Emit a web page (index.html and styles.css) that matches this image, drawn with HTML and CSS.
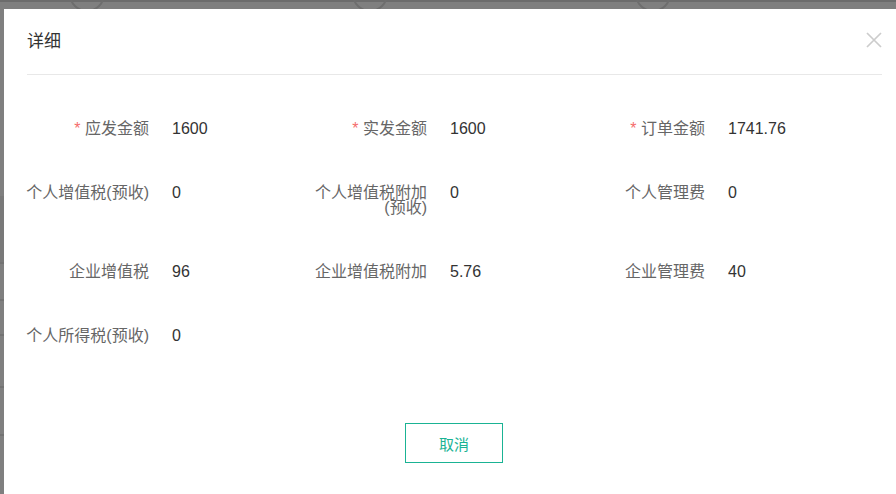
FILE: index.html
```html
<!DOCTYPE html>
<html lang="zh-CN">
<head>
    <meta charset="UTF-8">
    <meta name="viewport" content="width=device-width, initial-scale=1.0">
    <title>详细</title>
    <link rel="stylesheet" href="styles.css">
</head>
<body>
    <!-- страница под маской -->
    <div class="page">
        <div class="topbar"></div>
        <div class="tools">
            <span class="tool"></span>
            <span class="tool"></span>
            <span class="tool"></span>
        </div>
        <div class="list">
            <div class="list-row row-a"></div>
            <div class="list-row row-b"></div>
            <div class="list-row row-c"></div>
            <div class="list-row row-d"></div>
            <div class="list-row row-e"></div>
        </div>
    </div>

    <div class="mask"></div>

    <div class="dialog">
        <div class="dialog-header">
            <span class="dialog-title">详细</span>
            <span class="dialog-close">
                <svg width="16" height="16" viewBox="0 0 16 16">
                    <path d="M1 1 L15 15 M15 1 L1 15" stroke="#cccccc" stroke-width="1.7" fill="none"/>
                </svg>
            </span>
        </div>

        <div class="dialog-body">
            <div class="detail-grid">
                <div class="field">
                    <div class="field-label"><span class="req">*</span> 应发金额</div>
                    <div class="field-value">1600</div>
                </div>
                <div class="field">
                    <div class="field-label"><span class="req">*</span> 实发金额</div>
                    <div class="field-value">1600</div>
                </div>
                <div class="field">
                    <div class="field-label"><span class="req">*</span> 订单金额</div>
                    <div class="field-value">1741.76</div>
                </div>

                <div class="field">
                    <div class="field-label">个人增值税(预收)</div>
                    <div class="field-value">0</div>
                </div>
                <div class="field">
                    <div class="field-label">个人增值税附加(预收)</div>
                    <div class="field-value">0</div>
                </div>
                <div class="field">
                    <div class="field-label">个人管理费</div>
                    <div class="field-value">0</div>
                </div>

                <div class="field">
                    <div class="field-label">企业增值税</div>
                    <div class="field-value">96</div>
                </div>
                <div class="field">
                    <div class="field-label">企业增值税附加</div>
                    <div class="field-value">5.76</div>
                </div>
                <div class="field">
                    <div class="field-label">企业管理费</div>
                    <div class="field-value">40</div>
                </div>

                <div class="field">
                    <div class="field-label">个人所得税(预收)</div>
                    <div class="field-value">0</div>
                </div>
            </div>
        </div>

        <div class="dialog-footer">
            <button type="button" class="btn-cancel">取消</button>
        </div>
    </div>
</body>
</html>
```

FILE: styles.css
```css
body {
    margin: 0;
    background: #fff;
    font-family: "Liberation Sans", "Noto Sans CJK SC", sans-serif;
    overflow: hidden;
}

/* страница под маской */
.page {
    height: 494px;
}

.topbar {
    height: 2px;
    background: #d8d8d8;
}

.tools {
    display: flex;
    gap: 247px;
    margin-top: -26px;
    padding-left: 69px;
}

.tool {
    width: 32px;
    height: 32px;
    border: 2px solid #dcdcdc;
    border-radius: 50%;
}

.list {
    margin-top: 184px;
}

.list-row {
    border-bottom: 2px solid #e6e6e6;
}

.row-a { height: 66px; background: #f2f2f2; }
.row-b { height: 35px; }
.row-c { height: 33px; }
.row-d { height: 50px; }
.row-e { height: 46px; }

/* маска */
.mask {
    position: fixed;
    left: 0;
    top: 0;
    width: 100%;
    height: 100%;
    background-color: rgba(0, 0, 0, 0.5);
}

/* окно */
.dialog {
    position: fixed;
    left: 4px;
    top: 9px;
    width: 900px;
    height: 520px;
    box-sizing: border-box;
    padding: 0 22px 0 22px;
    background: #fff;
}

.dialog-header {
    display: flex;
    justify-content: space-between;
    align-items: center;
    margin-left: 1px;
    padding: 21px 0 20px;
    border-bottom: 1px solid #e8e8e8;
}

.dialog-title {
    font-size: 17px;
    line-height: 24px;
    color: #333;
}

.dialog-close {
    display: flex;
    margin-bottom: 5px;
}

.dialog-body {
    padding-top: 46px;
}

.detail-grid {
    display: grid;
    grid-template-columns: repeat(3, 278px);
    row-gap: 49px;
    font-size: 16px;
    line-height: 15px;
}

.field {
    display: flex;
    align-items: flex-start;
}

.field-label {
    width: 123px;
    flex-shrink: 0;
    text-align: right;
    color: #666;
}

.req {
    color: #f56c6c;
}

.field-value {
    margin-left: 23px;
    color: #333;
}

.dialog-footer {
    display: flex;
    justify-content: center;
    padding-top: 80px;
}

.btn-cancel {
    width: 98px;
    height: 40px;
    border: 1px solid #1ab394;
    background: #fff;
    color: #1ab394;
    font-family: "Liberation Sans", "Noto Sans CJK SC", sans-serif;
    font-size: 15px;
    cursor: pointer;
}
```
